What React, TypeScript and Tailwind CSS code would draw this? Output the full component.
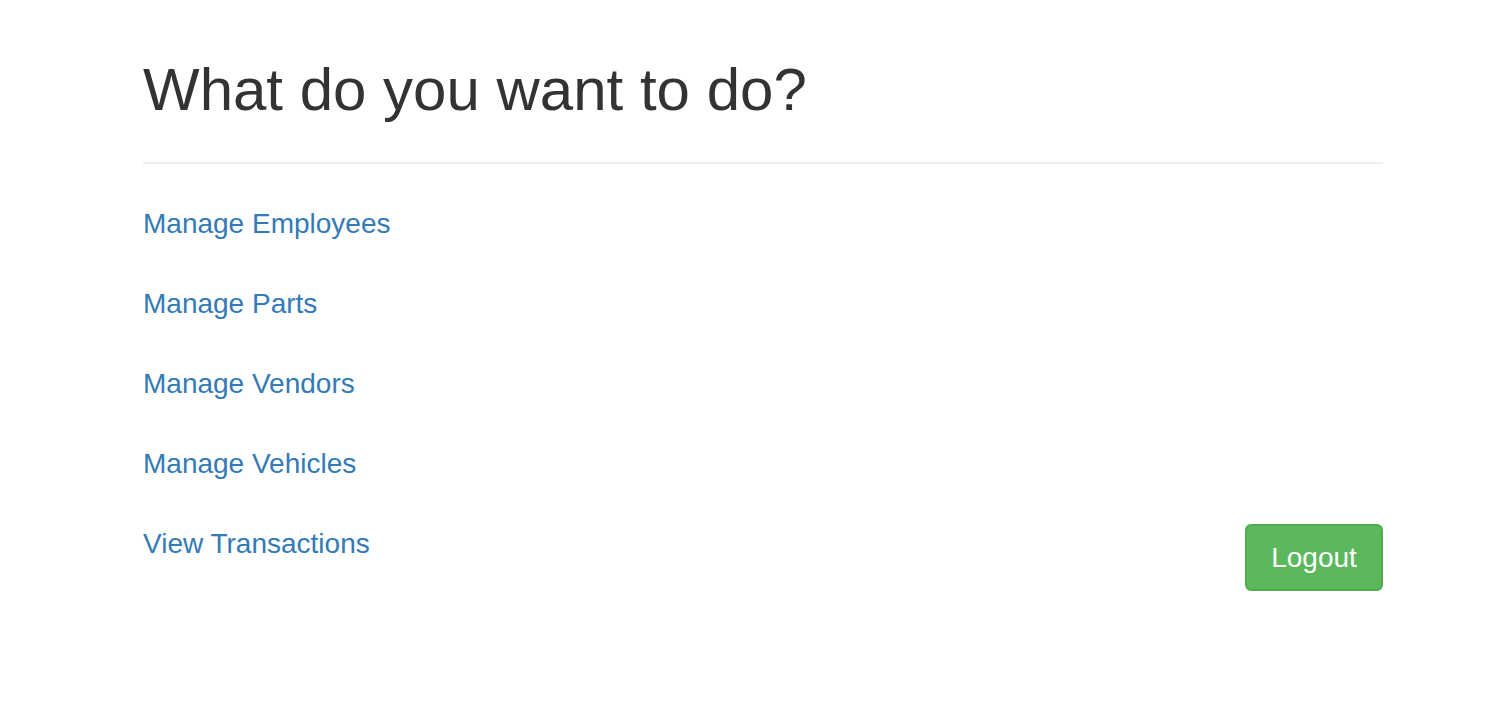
import React from "react";

export default function App() {
  const links = ["Manage Employees", "Manage Parts", "Manage Vendors", "Manage Vehicles"];
  return (
    <div
      className="min-h-[712px] w-full bg-white pl-[143px] pr-[128px] pt-[57px]"
      style={{ fontFamily: '"Liberation Sans", Arial, sans-serif' }}
    >
      <h1 className="text-[60px] leading-[66px] font-normal text-[#333333]">What do you want to do?</h1>
      <hr className="mt-[39px] border-0 h-[2px] bg-[#eeeeee]" />
      <div className="mt-[40px] flex flex-col gap-[40px]">
        {links.map((l) => (
          <div key={l}>
            <a href="#" className="text-[28px] leading-[40px] text-[#337ab7]">
              {l}
            </a>
          </div>
        ))}
        <div className="flex items-start justify-between">
          <a href="#" className="text-[28px] leading-[40px] text-[#337ab7]">
            View Transactions
          </a>
          <button className="flex h-[67px] w-[138px] items-center justify-center rounded-[6px] border-[2px] border-[#4cae4c] bg-[#5cb85c] text-[28px] text-white">
            Logout
          </button>
        </div>
      </div>
    </div>
  );
}
